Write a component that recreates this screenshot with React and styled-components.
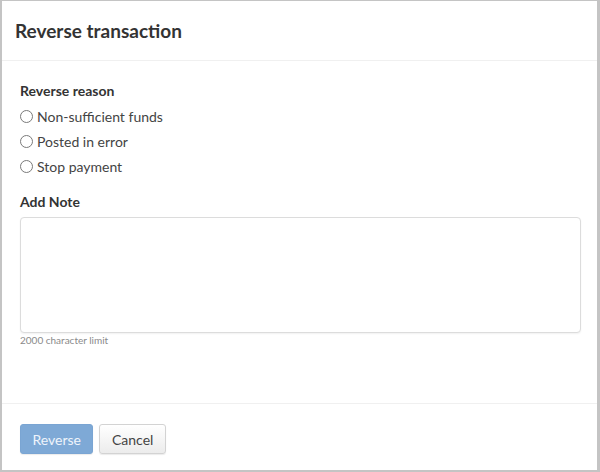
import React from 'react'
import styled, { createGlobalStyle } from 'styled-components'

const GlobalStyle = createGlobalStyle`
  html, body {
    margin: 0;
    padding: 0;
    background: #ffffff;
  }
  * {
    box-sizing: border-box;
  }
`

const Modal = styled.div`
  width: 600px;
  height: 472px;
  display: flex;
  flex-direction: column;
  background: #fff;
  border-top: 1px solid #c4c4c4;
  border-left: 2px solid #c4c4c4;
  border-right: 3px solid #c4c4c4;
  border-bottom: 2px solid #c4c4c4;
  font-family: Lato, "Open Sans", sans-serif;
  color: #333;
`

const Header = styled.div`
  height: 60px;
  padding: 0 13px;
  display: flex;
  align-items: center;
  border-bottom: 1px solid #f0f0f0;
`

const Title = styled.h1`
  margin: 0;
  font-size: 19px;
  font-weight: 700;
  color: #333;
`

const Body = styled.div`
  flex: 1;
  padding: 21px 18px 0 18px;
  border-bottom: 1px solid #f0f0f0;
`

const Label = styled.div`
  font-size: 14px;
  font-weight: 700;
  color: #333;
  line-height: 18px;
  margin-bottom: ${p => p.$gap || 4}px;
`

const RadioList = styled.div`
  display: flex;
  flex-direction: column;
  margin-bottom: 14px;
`

const RadioRow = styled.label`
  display: flex;
  align-items: center;
  height: 25px;
  font-size: 14px;
  color: #444;
  cursor: pointer;
`

const RadioCircle = styled.span`
  width: 13px;
  height: 13px;
  border-radius: 50%;
  border: 1px solid #7a7a7a;
  margin-right: 4px;
  flex-shrink: 0;
`

const NoteArea = styled.textarea`
  display: block;
  width: 561px;
  height: 116px;
  border: 1px solid #dcdcdc;
  border-radius: 4px;
  box-shadow: 0 1px 2px rgba(0, 0, 0, 0.06);
  resize: none;
  outline: none;
`

const Hint = styled.div`
  margin-top: 1px;
  font-size: 10px;
  color: #8a8a8a;
`

const Footer = styled.div`
  height: 66px;
  padding: 20px 18px 0 18px;
  display: flex;
  gap: 6px;
`

const Button = styled.button`
  height: 30px;
  padding: 0 ${p => (p.$primary ? 11.5 : 11.5)}px;
  border-radius: 3px;
  font-family: Lato, "Open Sans", sans-serif;
  font-size: 14px;
  cursor: pointer;
  border: 1px solid ${p => (p.$primary ? '#7aa5d3' : '#d3d3d3')};
  color: ${p => (p.$primary ? '#eef4fb' : '#444')};
  background: ${p =>
    p.$primary ? '#7ea9d6' : 'linear-gradient(#ffffff, #ececec)'};
  box-shadow: 0 1px 1px rgba(0, 0, 0, 0.08);
`

const reasons = ['Non-sufficient funds', 'Posted in error', 'Stop payment']

const App = () => {
  return (
    <>
      <GlobalStyle />
      <Modal>
        <Header>
          <Title>Reverse transaction</Title>
        </Header>
        <Body>
          <Label $gap={4}>Reverse reason</Label>
          <RadioList>
            {reasons.map(r => (
              <RadioRow key={r}>
                <RadioCircle />
                {r}
              </RadioRow>
            ))}
          </RadioList>
          <Label $gap={6}>Add Note</Label>
          <NoteArea />
          <Hint>2000 character limit</Hint>
        </Body>
        <Footer>
          <Button $primary>Reverse</Button>
          <Button>Cancel</Button>
        </Footer>
      </Modal>
    </>
  )
}

export default App
